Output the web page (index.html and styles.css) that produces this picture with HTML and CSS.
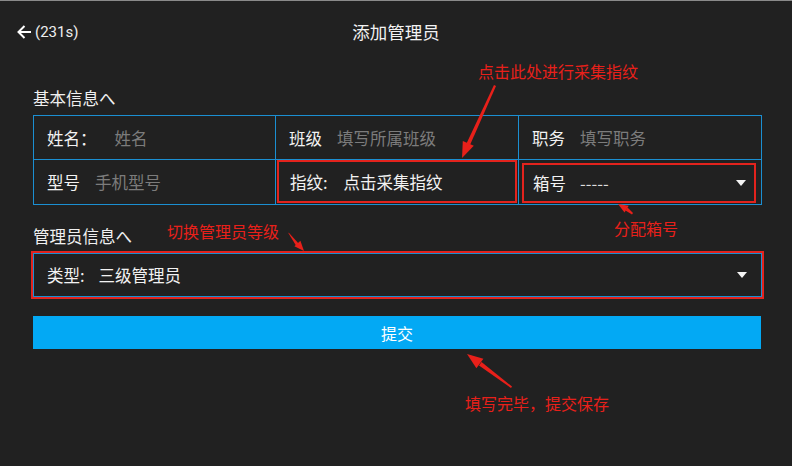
FILE: index.html
```html
<!DOCTYPE html>
<html lang="zh">
<head>
<meta charset="utf-8">
<link rel="stylesheet" href="styles.css">
</head>
<body>
<div class="screen">
  <header class="topbar">
    <div class="back">
      <svg class="back-icon" width="16" height="16" viewBox="0 0 16 16"><path d="M15 8H2.5M8.5 2L2.5 8l6 6" fill="none" stroke="#fff" stroke-width="2"/></svg>
      <span class="timer">(231s)</span>
    </div>
    <div class="title">添加管理员</div>
    <div></div>
  </header>

  <main class="content">
    <div class="section-title">基本信息へ</div>
    <div class="grid">
      <div class="cell"><span class="label">姓名：</span><span class="ph ph-wide">姓名</span></div>
      <div class="cell"><span class="label">班级</span><span class="ph">填写所属班级</span></div>
      <div class="cell"><span class="label">职务</span><span class="ph">填写职务</span></div>
      <div class="cell"><span class="label">型号</span><span class="ph">手机型号</span></div>
      <div class="cell cell-mark"><div class="mark-full"><span class="label">指纹:</span><span class="val">点击采集指纹</span></div></div>
      <div class="cell cell-mark"><div class="mark-inset"><span class="label">箱号</span><span class="val val-dash">-----</span><span class="caret"></span></div></div>
    </div>

    <div class="section-title section-two">管理员信息へ</div>
    <div class="select">
      <span class="label">类型:</span><span class="val">三级管理员</span><span class="caret"></span>
    </div>

    <button class="submit">提交</button>
  </main>

  <div class="note note-1">点击此处进行采集指纹</div>
  <div class="note note-2">分配箱号</div>
  <div class="note note-3">切换管理员等级</div>
  <div class="note note-4">填写完毕，提交保存</div>

  <svg class="arrows" width="792" height="466" viewBox="0 0 792 466">
    <g fill="#e8201a" stroke="none">
      <polygon points="494,84 496,85 470,144 466.5,142.5"/>
      <polygon points="462,157 473.8,144.7 462.8,139.9"/>
      <polygon points="633,212 632,213.5 625.5,209.5 627.5,206.5"/>
      <polygon points="618,203 628.7,204.7 624.5,211.5"/>
      <polygon points="288,231.5 289.5,232.5 299,243 296,244.5"/>
      <polygon points="304,250 300.4,239.8 294.4,245.2"/>
      <polygon points="512,385.5 511,387 479,364.5 481.5,361"/>
      <polygon points="467,353 483.4,357.7 476.4,367.3"/>
    </g>
  </svg>
</div>
</body>
</html>
```

FILE: styles.css
```css
* { box-sizing: border-box; }
html, body { margin: 0; padding: 0; }
body {
  background: #212121;
  font-family: "Noto Sans CJK SC", "Noto Sans", Roboto, sans-serif;
  color: #fff;
}
.screen {
  position: relative;
  width: 792px;
  height: 466px;
  overflow: hidden;
  background: #212121;
  border-top: 1px solid #8a8a8a;
}
.topbar {
  display: grid;
  grid-template-columns: 1fr auto 1fr;
  align-items: center;
  height: 61px;
  padding: 0 16px;
}
.back { display: flex; align-items: center; gap: 3px; }
.back-icon { display: block; }
.timer { font-family: Roboto, "Noto Sans", sans-serif; font-size: 15px; color: #eee; }
.title { font-size: 17.5px; color: #f2f2f2; }

.content { padding: 0 31px 0 33px; }
.section-title {
  font-size: 16.5px;
  line-height: 22px;
  margin-top: 25px;
  height: 28px;
  color: #f0f0f0;
}
.section-two { margin-top: 20px; height: 28px; }

.grid {
  display: grid;
  grid-template-columns: 242px 243px 243px;
  grid-template-rows: 44px 45px;
  border-top: 1px solid #1b8fd2;
  border-left: 1px solid #1b8fd2;
  width: 729px;
}
.cell {
  border-right: 1px solid #1b8fd2;
  border-bottom: 1px solid #1b8fd2;
  display: flex;
  align-items: center;
  padding-left: 13px;
  font-size: 16.5px;
}
.label { color: #f2f2f2; }
.ph { color: #7c7c7c; margin-left: 15px; }
.ph-wide { margin-left: 18px; }
.val { color: #f2f2f2; margin-left: 15px; }
.val-dash { color: #ddd; margin-left: 14px; }

.cell-mark { padding: 0; }
.mark-full {
  flex: 1;
  align-self: stretch;
  margin: 0 1px 1px 1px;
  border: 2px solid #e3231d;
  display: flex;
  align-items: center;
  padding-left: 11px;
}
.mark-full .val { margin-left: 16px; }
.mark-inset {
  flex: 1;
  align-self: stretch;
  margin: 3px 5px 1px 3px;
  border: 2px solid #e3231d;
  display: flex;
  align-items: center;
  padding-left: 9px;
  padding-right: 8px;
}
.caret {
  margin-left: auto;
  width: 0;
  height: 0;
  border-left: 5.5px solid transparent;
  border-right: 5.5px solid transparent;
  border-top: 6px solid #f4f4f4;
}

.select {
  display: flex;
  align-items: center;
  height: 44px;
  width: 729px;
  border: 1px solid #1b8fd2;
  box-shadow: 0 0 0 2px #e3231d;
  padding: 0 14px 0 13px;
  font-size: 16.5px;
}
.select .val { margin-left: 14px; }

.submit {
  display: block;
  margin-top: 19px;
  width: 728px;
  height: 33px;
  border: none;
  background: #03a9f4;
  color: #fff;
  font-family: "Noto Sans CJK SC", sans-serif;
  font-size: 16px;
  padding: 0;
}

.note {
  position: absolute;
  color: #e8201a;
  font-family: "Noto Sans CJK SC", sans-serif;
  font-size: 16px;
  line-height: 20px;
  white-space: nowrap;
}
.note-1 { left: 478px; top: 60px; }
.note-2 { left: 614px; top: 217px; }
.note-3 { left: 167px; top: 220px; }
.note-4 { left: 465px; top: 392px; }

.arrows { position: absolute; left: 0; top: 0; pointer-events: none; }
```
